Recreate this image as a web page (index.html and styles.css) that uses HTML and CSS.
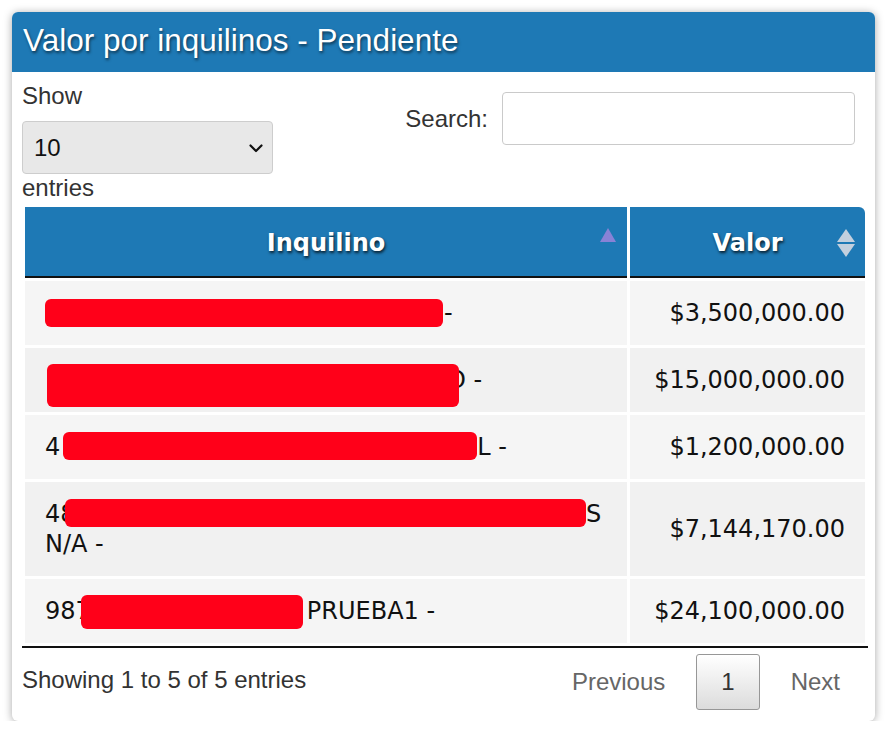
FILE: index.html
```html
<!DOCTYPE html>
<html lang="es">
<head>
<meta charset="utf-8">
<title>Valor por inquilinos - Pendiente</title>
<link rel="stylesheet" href="styles.css">
</head>
<body>
<div class="card">
  <div class="card-header">
    <h2 class="card-title">Valor por inquilinos - Pendiente</h2>
  </div>
  <div class="card-body">
    <div class="controls">
      <div class="length">
        <span class="length-label">Show</span>
        <div class="select-wrap">
          <select class="select">
            <option>10</option>
            <option>25</option>
            <option>50</option>
            <option>100</option>
          </select>
          <svg class="chevron" width="14" height="9" viewBox="0 0 14 9"><path d="M1.5 1.5 L7 7 L12.5 1.5" fill="none" stroke="#111" stroke-width="2.2" stroke-linecap="round" stroke-linejoin="round"/></svg>
        </div>
        <span class="length-label">entries</span>
      </div>
      <div class="filter">
        <label class="filter-label" for="q">Search:</label>
        <input class="search" id="q" type="search">
      </div>
    </div>

    <table class="data">
      <colgroup>
        <col class="col-name">
        <col class="col-value">
      </colgroup>
      <thead>
        <tr>
          <th class="th">Inquilino
            <svg class="sort sort-asc" width="16" height="14" viewBox="0 0 16 14"><polygon points="8,0 16,14 0,14" fill="#8882d6"/></svg>
          </th>
          <th class="th">Valor
            <svg class="sort sort-both" width="18" height="29" viewBox="0 0 18 29"><polygon points="9,0 18,13 0,13" fill="#c3d0de"/><polygon points="0,15 18,15 9,28" fill="#c3d0de"/></svg>
          </th>
        </tr>
      </thead>
      <tbody>
        <tr class="odd">
          <td class="td"><span class="redact r1"></span>-</td>
          <td class="td num">$3,500,000.00</td>
        </tr>
        <tr class="even">
          <td class="td"><span class="redact r2"></span>O -</td>
          <td class="td num">$15,000,000.00</td>
        </tr>
        <tr class="odd">
          <td class="td">4<span class="redact r3"></span>L -</td>
          <td class="td num">$1,200,000.00</td>
        </tr>
        <tr class="even">
          <td class="td">48<span class="redact r4"></span>S<br>N/A -</td>
          <td class="td num">$7,144,170.00</td>
        </tr>
        <tr class="odd">
          <td class="td">987<span class="redact r5"></span>PRUEBA1 -</td>
          <td class="td num">$24,100,000.00</td>
        </tr>
      </tbody>
    </table>

    <div class="footer">
      <div class="info">Showing 1 to 5 of 5 entries</div>
      <div class="paginate">
        <a class="page-btn disabled">Previous</a>
        <a class="page-btn current">1</a>
        <a class="page-btn disabled">Next</a>
      </div>
    </div>
  </div>
</div>
</body>
</html>
```

FILE: styles.css
```css
* { box-sizing: border-box; }

html, body {
  margin: 0;
  padding: 0;
  background: #ffffff;
}

body {
  font-family: "Liberation Sans", Arial, sans-serif;
  color: #333333;
  font-size: 24px;
}

.card {
  margin: 12px 0 0 12px;
  width: 863px;
  background: #ffffff;
  border-radius: 6px;
  box-shadow: 0 1px 8px rgba(0, 0, 0, 0.35);
  overflow: hidden;
}

.card-header {
  height: 60px;
  background: #1e79b5;
  padding: 10px 11px 0;
}

.card-title {
  margin: 0;
  font-family: "Liberation Sans", Arial, sans-serif;
  font-weight: normal;
  font-size: 31.5px;
  line-height: 36px;
  color: #ffffff;
  text-shadow: 1px 2px 3px rgba(0, 0, 0, 0.55);
}

.card-body {
  padding: 10px 7px 11px 10px;
}

.controls {
  display: flex;
  justify-content: space-between;
  align-items: flex-start;
}

.length {
  width: 251px;
}

.length-label {
  display: block;
  line-height: 28px;
}

.select-wrap {
  position: relative;
  margin-top: 11px;
  width: 251px;
  height: 53px;
}

.select {
  appearance: none;
  -webkit-appearance: none;
  width: 100%;
  height: 100%;
  margin: 0;
  padding: 0 40px 0 11px;
  font-family: "Liberation Sans", Arial, sans-serif;
  font-size: 24px;
  color: #111111;
  background: #e8e8e8;
  border: 1px solid #cdcdcd;
  border-radius: 4px;
  outline: none;
}

.chevron {
  position: absolute;
  left: 227px;
  top: 23px;
  pointer-events: none;
}

.filter {
  display: flex;
  align-items: center;
  margin-top: 10px;
  margin-right: 13px;
}

.filter-label {
  margin-right: 14px;
  line-height: 28px;
}

.search {
  width: 353px;
  height: 53px;
  margin: 0;
  padding: 0 10px;
  font-size: 24px;
  background: #ffffff;
  border: 1px solid #cacaca;
  border-radius: 4px;
  outline: none;
}

.data {
  margin-top: 2px;
  width: 846px;
  table-layout: fixed;
  border-collapse: separate;
  border-spacing: 3px;
  border-bottom: 2px solid #111111;
  font-family: "DejaVu Sans", Verdana, sans-serif;
  font-size: 24px;
  color: #111111;
}

.col-value { width: 235px; }

.th {
  position: relative;
  padding: 21px 20px 18px;
  line-height: 30px;
  background: #1e79b5;
  color: #ffffff;
  font-weight: bold;
  text-align: center;
  border-bottom: 2px solid #111111;
  text-shadow: 1px 2px 3px rgba(0, 0, 0, 0.75);
}

.th:last-child {
  border-top-right-radius: 6px;
}

.sort {
  position: absolute;
}

.sort-asc {
  right: 11px;
  top: 21px;
}

.sort-both {
  right: 10px;
  top: 22px;
}

.td {
  padding: 17px 20px;
  line-height: 30px;
  vertical-align: middle;
  white-space: nowrap;
}

.odd .td { background: #f5f5f5; }
.even .td { background: #f1f1f1; }

.num { text-align: right; }

.redact {
  position: relative;
  z-index: 1;
  display: inline-block;
  vertical-align: middle;
  background: #ff0019;
  border-radius: 6px;
}

.r1 {
  width: 398px;
  height: 28px;
  margin: -4px 1px 0 0;
  top: 1px;
}

.r2 {
  width: 412px;
  height: 43px;
  margin: -14px -12px -14px 2px;
  top: 4px;
}

.r3 {
  width: 414px;
  height: 28px;
  margin: -4px 0 0 3px;
  top: 0;
}

.r4 {
  width: 521px;
  height: 28px;
  margin: -4px 0 0 -10.5px;
  top: 0;
}

.r5 {
  width: 222px;
  height: 34px;
  margin: -6px 4px -6px -10px;
  top: 0;
}

.footer {
  display: flex;
  justify-content: space-between;
  align-items: flex-start;
}

.info {
  padding-top: 18px;
  line-height: 28px;
}

.paginate {
  display: flex;
  gap: 6px;
  padding-top: 6px;
  padding-right: 3px;
}

.page-btn {
  display: block;
  padding: 12px 24px;
  line-height: 30px;
  border: 1px solid transparent;
  border-radius: 3px;
  color: #333333;
  text-decoration: none;
}

.page-btn.disabled {
  color: #666666;
}

.page-btn.current {
  border-color: #979797;
  background: linear-gradient(to bottom, #ffffff 0%, #dcdcdc 100%);
}
```
